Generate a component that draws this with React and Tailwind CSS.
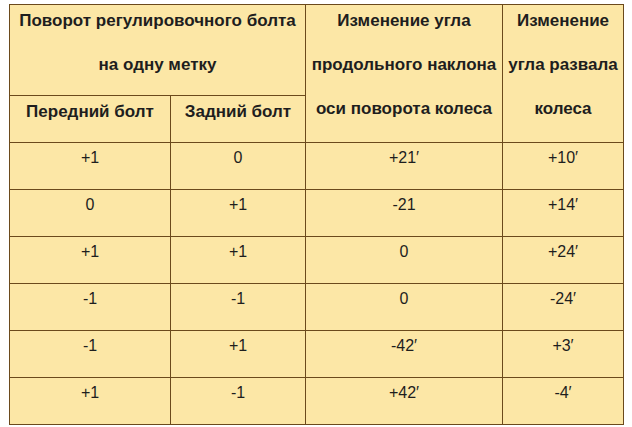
const ROWS = [
  ['+1', '0', '+21′', '+10′'],
  ['0', '+1', '-21', '+14′'],
  ['+1', '+1', '0', '+24′'],
  ['-1', '-1', '0', '-24′'],
  ['-1', '+1', '-42′', '+3′'],
  ['+1', '-1', '+42′', '-4′'],
];

function Lines({ items }) {
  return items.map((t, i) => (
    <div key={i} className="h-[44px] leading-[32px] whitespace-nowrap">{t}</div>
  ));
}

export default function App() {
  const cell = 'border border-[#6b4a1c] p-0 align-top text-center';
  return (
    <div className="min-h-screen bg-white pt-[4px] pl-[9px]" style={{ fontFamily: '"Liberation Sans", Arial, sans-serif' }}>
      <table className="table-fixed border-collapse bg-[#fce7a6] text-[#1e1e1e] text-[17px] w-[614px]">
        <colgroup>
          <col className="w-[161px]" />
          <col className="w-[135px]" />
          <col className="w-[197px]" />
          <col className="w-[121px]" />
        </colgroup>
        <thead className="font-bold">
          <tr className="h-[91px]">
            <th colSpan={2} className={cell}>
              <Lines items={['Поворот регулировочного болта', 'на одну метку']} />
            </th>
            <th rowSpan={2} className={cell}>
              <Lines items={['Изменение угла', 'продольного наклона', 'оси поворота колеса']} />
            </th>
            <th rowSpan={2} className={cell}>
              <Lines items={['Изменение', 'угла развала', 'колеса']} />
            </th>
          </tr>
          <tr className="h-[47px]">
            <th className={cell}><Lines items={['Передний болт']} /></th>
            <th className={cell}><Lines items={['Задний болт']} /></th>
          </tr>
        </thead>
        <tbody className="text-[16px]">
          {ROWS.map((r, i) => (
            <tr key={i} className="h-[47px]">
              {r.map((v, j) => (
                <td key={j} className={cell}>
                  <div className="leading-[30px]">{v}</div>
                </td>
              ))}
            </tr>
          ))}
        </tbody>
      </table>
    </div>
  );
}
